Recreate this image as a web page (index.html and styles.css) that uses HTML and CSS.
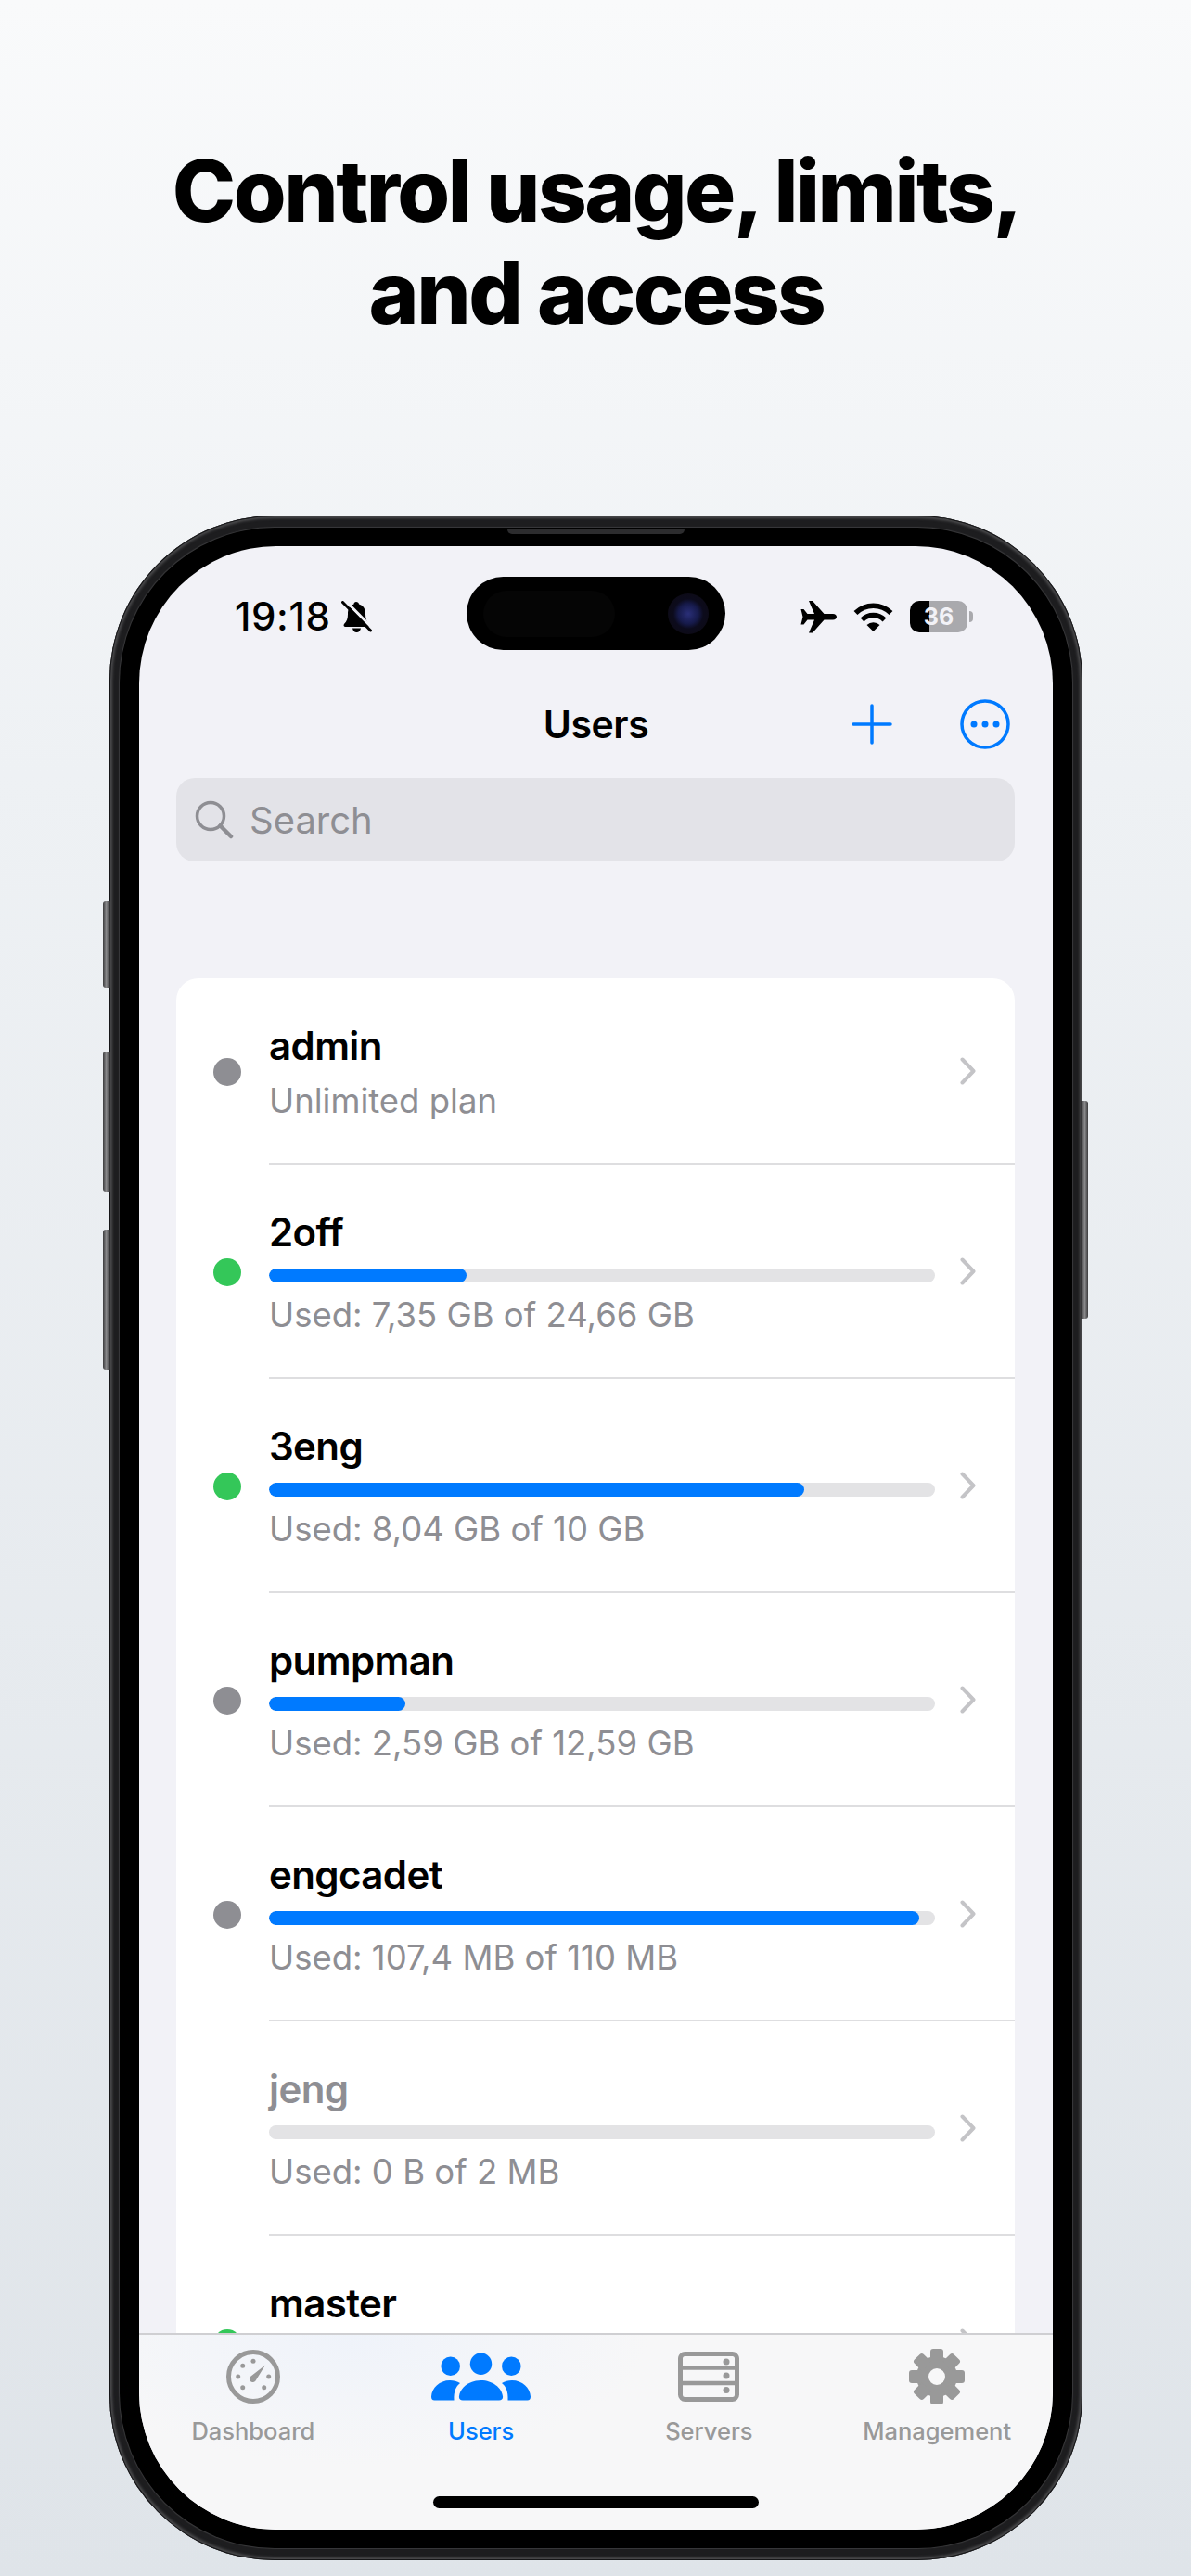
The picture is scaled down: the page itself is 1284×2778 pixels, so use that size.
FILE: index.html
```html
<!DOCTYPE html>
<html lang="en">
<head>
    <meta charset="UTF-8">
    <meta name="viewport" content="width=device-width, initial-scale=1.0">
    <title>Users</title>
    <link rel="stylesheet" href="styles.css">
</head>
<body>
    <h1 class="headline">Control usage, limits,<br>and access</h1>

    <div class="phone">
        <span class="side-btn side-btn-mute"></span>
        <span class="side-btn side-btn-up"></span>
        <span class="side-btn side-btn-down"></span>
        <span class="side-btn side-btn-power"></span>
        <span class="speaker"></span>

        <div class="bezel">
            <div class="screen">
                <!-- Dynamic island -->
                <div class="island">
                    <span class="island-pill"></span>
                    <span class="lens"></span>
                </div>

                <div class="status-bar">
                    <div class="status-left">
                        <span class="clock">19:18</span>
                        <svg class="bell" width="33" height="35" viewBox="0 0 33 35">
                            <path d="M16 1c-1.500 0-2.500 1-2.500 2.500C8.500 5 7 9 7 14c0 5-1 8-4 11-1 1-.5 3 1.500 3h24c2 0 2.500-2 1.500-3-3-3-4-6-4-11 0-5-2-9-7-10.500C19 2 17.500 1 16 1zM12 29.500c.5 2.500 2 4.500 4.500 4.500s4-2 4.500-4.500z" fill="#000"/>
                            <path d="M4.500 0L33 29" stroke="#f2f2f7" stroke-width="3"/>
                            <path d="M1.500 1.500L31.500 32" stroke="#000" stroke-width="3" stroke-linecap="round"/>
                        </svg>
                    </div>
                    <div class="status-right">
                        <svg width="39" height="35" viewBox="0 0 39 35">
                            <path d="M35 14H25.500L13 0H9l6 14H7.500L3.500 9H.5l2 8.200-2 8.300h3l4-5H15L9 34.500h4l12.500-14H35c2.500 0 4-1.500 4-3.300S37.500 14 35 14z" fill="#000"/>
                        </svg>
                        <svg width="43" height="31" viewBox="0 0 43 31">
                            <path d="M2.500 11A27 27 0 0 1 40.500 11M9.500 18.500A17 17 0 0 1 33.500 18.500" fill="none" stroke="#000" stroke-width="5.500"/>
                            <path d="M21.500 31L14.500 24a10 10 0 0 1 14 0z" fill="#000"/>
                        </svg>
                        <div class="battery">36</div>
                    </div>
                </div>

                <div class="nav-bar">
                    <span></span>
                    <div class="nav-title">Users</div>
                    <div class="nav-actions">
                        <svg width="44" height="44" viewBox="0 0 44 44">
                            <path d="M22 2v40M2 22h40" stroke="#007aff" stroke-width="3.500" stroke-linecap="round"/>
                        </svg>
                        <svg width="54" height="54" viewBox="0 0 54 54">
                            <circle cx="27" cy="27" r="25" fill="none" stroke="#007aff" stroke-width="3.500"/>
                            <circle cx="15" cy="27" r="3.500" fill="#007aff"/>
                            <circle cx="27" cy="27" r="3.500" fill="#007aff"/>
                            <circle cx="39" cy="27" r="3.500" fill="#007aff"/>
                        </svg>
                    </div>
                </div>

                <div class="search">
                    <svg width="42" height="42" viewBox="0 0 42 42">
                        <circle cx="17" cy="17" r="14.500" fill="none" stroke="#8e8e93" stroke-width="3.500"/>
                        <path d="M27.500 27.500L39 39" stroke="#8e8e93" stroke-width="4.500" stroke-linecap="round"/>
                    </svg>
                    <span>Search</span>
                </div>

                <div class="user-list">
                    <div class="user-row user-row-first">
                        <span class="dot"></span>
                        <div class="row-body">
                            <div class="row-main">
                                <div class="user-name">admin</div>
                                <div class="user-sub">Unlimited plan</div>
                            </div>
                            <svg class="chevron" width="17" height="30" viewBox="0 0 17 30"><path d="M2.500 2.500L14.500 15L2.500 27.500"/></svg>
                        </div>
                    </div>
                    <div class="user-row">
                        <span class="dot dot-on"></span>
                        <div class="row-body">
                            <div class="row-main">
                                <div class="user-name">2off</div>
                                <div class="bar"><div class="bar-fill" style="width: 29.7%"></div></div>
                                <div class="user-sub">Used: 7,35 GB of 24,66 GB</div>
                            </div>
                            <svg class="chevron" width="17" height="30" viewBox="0 0 17 30"><path d="M2.500 2.500L14.500 15L2.500 27.500"/></svg>
                        </div>
                    </div>
                    <div class="user-row">
                        <span class="dot dot-on"></span>
                        <div class="row-body">
                            <div class="row-main">
                                <div class="user-name">3eng</div>
                                <div class="bar"><div class="bar-fill" style="width: 80.3%"></div></div>
                                <div class="user-sub">Used: 8,04 GB of 10 GB</div>
                            </div>
                            <svg class="chevron" width="17" height="30" viewBox="0 0 17 30"><path d="M2.500 2.500L14.500 15L2.500 27.500"/></svg>
                        </div>
                    </div>
                    <div class="user-row">
                        <span class="dot"></span>
                        <div class="row-body">
                            <div class="row-main">
                                <div class="user-name">pumpman</div>
                                <div class="bar"><div class="bar-fill" style="width: 20.5%"></div></div>
                                <div class="user-sub">Used: 2,59 GB of 12,59 GB</div>
                            </div>
                            <svg class="chevron" width="17" height="30" viewBox="0 0 17 30"><path d="M2.500 2.500L14.500 15L2.500 27.500"/></svg>
                        </div>
                    </div>
                    <div class="user-row">
                        <span class="dot"></span>
                        <div class="row-body">
                            <div class="row-main">
                                <div class="user-name">engcadet</div>
                                <div class="bar"><div class="bar-fill" style="width: 97.6%"></div></div>
                                <div class="user-sub">Used: 107,4 MB of 110 MB</div>
                            </div>
                            <svg class="chevron" width="17" height="30" viewBox="0 0 17 30"><path d="M2.500 2.500L14.500 15L2.500 27.500"/></svg>
                        </div>
                    </div>
                    <div class="user-row">
                        <span class="dot dot-off"></span>
                        <div class="row-body">
                            <div class="row-main">
                                <div class="user-name user-name-off">jeng</div>
                                <div class="bar"></div>
                                <div class="user-sub">Used: 0 B of 2 MB</div>
                            </div>
                            <svg class="chevron" width="17" height="30" viewBox="0 0 17 30"><path d="M2.500 2.500L14.500 15L2.500 27.500"/></svg>
                        </div>
                    </div>
                    <div class="user-row">
                        <span class="dot dot-on"></span>
                        <div class="row-body">
                            <div class="row-main">
                                <div class="user-name">master</div>
                                <div class="bar"></div>
                                <div class="user-sub">&nbsp;</div>
                            </div>
                            <svg class="chevron" width="17" height="30" viewBox="0 0 17 30"><path d="M2.500 2.500L14.500 15L2.500 27.500"/></svg>
                        </div>
                    </div>
                </div>

                <!-- Tab bar lies over the list -->
                <div class="tab-bar">
                    <div class="tab">
                        <svg width="58" height="58" viewBox="0 0 58 58" fill="#999">
                            <circle cx="29" cy="29" r="26.500" fill="none" stroke="#999" stroke-width="5"/>
                            <circle cx="17.700" cy="17.300" r="2.500"/>
                            <circle cx="29" cy="12.300" r="2.500"/>
                            <circle cx="12.700" cy="29" r="2.500"/>
                            <circle cx="45.700" cy="29" r="2.500"/>
                            <circle cx="17.700" cy="40.700" r="2.500"/>
                            <circle cx="40.700" cy="40.700" r="2.500"/>
                            <path d="M42 16.500L31.500 33.500c-1.500 1.800-4 2-5.500.5s-1.500-4 .5-5.500z"/>
                        </svg>
                        <span class="tab-label">Dashboard</span>
                    </div>
                    <div class="tab tab-active">
                        <svg width="107" height="52" viewBox="0 0 107 52" fill="#007aff">
                            <circle cx="20.700" cy="14.700" r="10.300"/>
                            <circle cx="53.500" cy="12.200" r="11.700"/>
                            <circle cx="86.300" cy="14.700" r="10.300"/>
                            <path d="M34 51.500c-3 0-4.500-2-4-4.500C31 38 41 30 53.500 30S76 38 77 47c.5 2.500-1 4.500-4 4.500z"/>
                            <path d="M3.500 51.500C1 51.500 0 50 0 47.500 .5 38 9 30 20 30c4 0 8 1 11 3-4.500 3.500-7 9-6.500 18.500z"/>
                            <path d="M103.500 51.500c2.500 0 3.500-1.500 3.500-4C106.500 38 98 30 87 30c-4 0-8 1-11 3 4.500 3.500 7 9 6.500 18.500z"/>
                        </svg>
                        <span class="tab-label">Users</span>
                    </div>
                    <div class="tab">
                        <svg width="66" height="54" viewBox="0 0 66 54" fill="#999">
                            <rect x="2.500" y="2.500" width="61" height="49" rx="5" fill="none" stroke="#999" stroke-width="5"/>
                            <path d="M2 17.500h62M2 34h62" stroke="#999" stroke-width="4.500"/>
                            <circle cx="52" cy="11" r="3.500"/>
                            <circle cx="52" cy="26" r="3.500"/>
                            <circle cx="52" cy="41.500" r="3.500"/>
                        </svg>
                        <span class="tab-label">Servers</span>
                    </div>
                    <div class="tab">
                        <svg width="60" height="60" viewBox="0 0 60 60" fill="#999">
                            <circle cx="30" cy="30" r="15.500" fill="none" stroke="#999" stroke-width="13"/>
                            <rect x="23" y="0" width="14" height="14" rx="3"/>
                            <rect x="23" y="0" width="14" height="14" rx="3" transform="rotate(45 30 30)"/>
                            <rect x="23" y="0" width="14" height="14" rx="3" transform="rotate(90 30 30)"/>
                            <rect x="23" y="0" width="14" height="14" rx="3" transform="rotate(135 30 30)"/>
                            <rect x="23" y="0" width="14" height="14" rx="3" transform="rotate(180 30 30)"/>
                            <rect x="23" y="0" width="14" height="14" rx="3" transform="rotate(225 30 30)"/>
                            <rect x="23" y="0" width="14" height="14" rx="3" transform="rotate(270 30 30)"/>
                            <rect x="23" y="0" width="14" height="14" rx="3" transform="rotate(315 30 30)"/>
                        </svg>
                        <span class="tab-label">Management</span>
                    </div>
                    <span class="home-indicator"></span>
                </div>
            </div>
        </div>
    </div>
</body>
</html>
```

FILE: styles.css
```css
* {
    box-sizing: border-box;
}

html, body {
    margin: 0;
    padding: 0;
}

body {
    width: 1284px;
    height: 2778px;
    overflow: hidden;
    display: flex;
    flex-direction: column;
    align-items: center;
    background: linear-gradient(180deg, #f9fafb 0%, #eef1f4 30%, #dfe4e9 100%);
    font-family: Inter, "Noto Sans", sans-serif;
    color: #000;
}

.headline {
    margin: 151px 0 0 2px;
    height: 405px;
    font-size: 92px;
    line-height: 110px;
    font-weight: 800;
    letter-spacing: -2.500px;
    text-align: center;
}

/* Phone frame */
.phone {
    position: relative;
    width: 1049px;
    height: 2205px;
    margin-left: 1px;
    padding: 14px 12px;
    border-radius: 178px;
    background: #1d1d1f;
    box-shadow: inset 0 0 0 1px #161618, inset 0 0 3px 3px #4c4c4e;
}

.side-btn {
    position: absolute;
    width: 8px;
    background: linear-gradient(90deg, #3a3a3c, #8a8a8c 45%, #2a2a2c);
    border-radius: 3px 0 0 3px;
}

.side-btn-mute {
    left: -7px;
    top: 416px;
    height: 93px;
}

.side-btn-up {
    left: -7px;
    top: 578px;
    height: 151px;
}

.side-btn-down {
    left: -7px;
    top: 770px;
    height: 151px;
}

.side-btn-power {
    right: -6px;
    top: 631px;
    height: 235px;
    border-radius: 0 3px 3px 0;
    background: linear-gradient(90deg, #2a2a2c, #8a8a8c 55%, #3a3a3c);
}

.speaker {
    position: absolute;
    left: 429px;
    top: 14px;
    width: 191px;
    height: 6px;
    background: #2c2c2e;
    border-radius: 0 0 5px 5px;
}

.bezel {
    height: 100%;
    padding: 19px 20px;
    background: #000;
    border-radius: 166px;
    box-shadow: 0 0 0 1px #000, 0 0 1px 2px #3a3a3c;
}

.screen {
    position: relative;
    height: 100%;
    overflow: hidden;
    background: #f2f2f7;
    border-radius: 148px;
}

.island {
    position: absolute;
    left: 353px;
    top: 33px;
    width: 279px;
    height: 79px;
    background: #000;
    border-radius: 40px;
}

.island-pill {
    position: absolute;
    left: 18px;
    top: 15px;
    width: 142px;
    height: 50px;
    border-radius: 25px;
    background: #050505;
}

.lens {
    position: absolute;
    left: 217px;
    top: 18px;
    width: 44px;
    height: 44px;
    border-radius: 50%;
    background: radial-gradient(circle, #2a2f78 0%, #161a4a 35%, #0c0b1c 52%, #0d0a10 100%);
}

/* Status bar */
.status-bar {
    display: flex;
    justify-content: space-between;
    align-items: center;
    height: 152px;
    padding: 0 92px 0 103px;
}

.status-left, .status-right {
    display: flex;
    align-items: center;
}

.status-left {
    gap: 11px;
}

.clock {
    font-size: 42px;
    line-height: 44px;
    font-weight: 500;
    letter-spacing: 0.6px;
}

.status-right {
    gap: 18px;
}

.battery {
    position: relative;
    width: 62px;
    height: 34px;
    border-radius: 10px;
    background: linear-gradient(90deg, #000 21px, #a9a9ad 21px);
    color: #f2f2f7;
    font-size: 25px;
    font-weight: 700;
    line-height: 34px;
    text-align: center;
}

.battery::after {
    content: "";
    position: absolute;
    right: -6px;
    top: 11px;
    width: 4px;
    height: 12px;
    background: #a9a9ad;
    border-radius: 0 4px 4px 0;
}

/* Nav bar */
.nav-bar {
    display: grid;
    grid-template-columns: 1fr auto 1fr;
    align-items: center;
    height: 80px;
}

.nav-title {
    font-size: 41px;
    font-weight: 600;
    letter-spacing: -0.4px;
}

.nav-actions {
    display: flex;
    justify-content: flex-end;
    align-items: center;
    gap: 73px;
    padding-right: 46px;
}

.search {
    display: flex;
    align-items: center;
    gap: 17px;
    height: 90px;
    margin: 18px 41px 0 40px;
    padding-left: 20px;
    background: #e3e3e8;
    border-radius: 20px;
    color: #8e8e93;
    font-size: 40px;
}

/* User list */
.user-list {
    margin: 126px 41px 0 40px;
    background: #fff;
    border-radius: 24px 24px 0 0;
}

.user-row {
    display: flex;
    height: 231px;
    padding-left: 40px;
}

.user-row-first {
    height: 201px;
}

.dot {
    flex: none;
    align-self: center;
    width: 30px;
    height: 30px;
    margin-right: 30px;
    border-radius: 50%;
    background: #8e8e93;
}

.dot-on {
    background: #34c759;
}

.dot-off {
    background: transparent;
}

.row-body {
    flex: 1;
    display: flex;
    align-items: center;
    gap: 27px;
    padding-right: 42px;
    border-bottom: 2px solid #dedee0;
}

.row-main {
    flex: 1;
    min-width: 0;
    padding-top: 3px;
}

.user-name {
    font-size: 42px;
    line-height: 48px;
    font-weight: 600;
    letter-spacing: -0.6px;
}

.user-name-off {
    color: #8e8e93;
}

.user-sub {
    margin-top: 13px;
    font-size: 36.500px;
    line-height: 44px;
    color: #8e8e93;
}

.bar {
    height: 15px;
    margin-top: 15px;
    border-radius: 8px;
    background: #e3e3e5;
    overflow: hidden;
}

.bar-fill {
    height: 100%;
    border-radius: 8px;
    background: #007aff;
}

.chevron {
    flex: none;
}

.chevron path {
    fill: none;
    stroke: #c4c4c7;
    stroke-width: 4;
    stroke-linecap: round;
    stroke-linejoin: round;
}

/* Tab bar */
.tab-bar {
    position: absolute;
    left: 0;
    right: 0;
    bottom: 0;
    height: 212px;
    display: grid;
    grid-template-columns: repeat(4, 1fr);
    align-items: start;
    padding: 15px 2px 0 0;
    border-top: 2px solid #cfcfd2;
    background: radial-gradient(ellipse 320px 140px at 230px 0, #eff3fa, rgba(239, 243, 250, 0)), #f7f7f8;
}

.tab {
    display: flex;
    flex-direction: column;
    align-items: center;
    color: #999;
}

.tab svg {
    height: 60px;
}

.tab-active {
    color: #007aff;
}

.tab-label {
    margin-top: 14px;
    font-size: 25.500px;
    line-height: 30px;
    font-weight: 500;
}

.home-indicator {
    position: absolute;
    left: 317px;
    bottom: 23px;
    width: 351px;
    height: 13px;
    border-radius: 7px;
    background: #000;
}
```
